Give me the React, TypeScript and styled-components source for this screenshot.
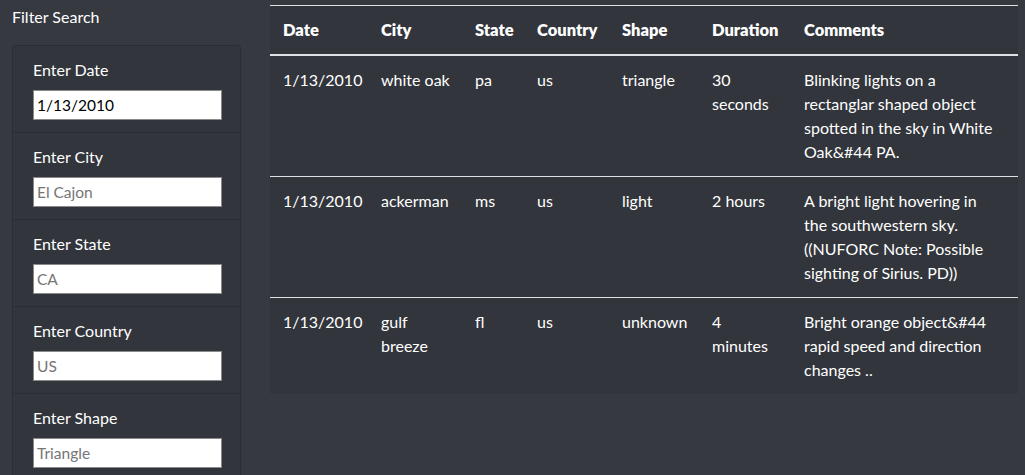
import React from "react";
import styled, { createGlobalStyle } from "styled-components";

const GlobalStyle = createGlobalStyle`
    html, body {
        margin: 0;
        padding: 0;
        background: #363940;
    }

    body {
        color: #ffffff;
        font-family: Lato, "Open Sans", sans-serif;
        font-size: 16px;
        line-height: 24px;
    }
`;

type Sighting = {
    datetime: string;
    city: string;
    state: string;
    country: string;
    shape: string;
    durationMinutes: string;
    comments: string;
};

const sightings: Array<Sighting> = [
    {
        datetime: "1/13/2010",
        city: "white oak",
        state: "pa",
        country: "us",
        shape: "triangle",
        durationMinutes: "30 seconds",
        comments: "Blinking lights on a rectanglar shaped object spotted in the sky in White Oak&#44 PA.",
    },
    {
        datetime: "1/13/2010",
        city: "ackerman",
        state: "ms",
        country: "us",
        shape: "light",
        durationMinutes: "2 hours",
        comments: "A bright light hovering in the southwestern sky. ((NUFORC Note: Possible sighting of Sirius. PD))",
    },
    {
        datetime: "1/13/2010",
        city: "gulf breeze",
        state: "fl",
        country: "us",
        shape: "unknown",
        durationMinutes: "4 minutes",
        comments: "Bright orange object&#44 rapid speed and direction changes ..",
    },
];

const filters = [
    { label: "Enter Date", id: "datetime", value: "1/13/2010", placeholder: "1/13/2010" },
    { label: "Enter City", id: "city", value: "", placeholder: "El Cajon" },
    { label: "Enter State", id: "state", value: "", placeholder: "CA" },
    { label: "Enter Country", id: "country", value: "", placeholder: "US" },
    { label: "Enter Shape", id: "shape", value: "", placeholder: "Triangle" },
];

const columns = [
    { title: "Date", width: 98 },
    { title: "City", width: 94 },
    { title: "State", width: 62 },
    { title: "Country", width: 85 },
    { title: "Shape", width: 90 },
    { title: "Duration", width: 92 },
    { title: "Comments", width: 227 },
];

const App = () => {
    return (
        <PageContainer>
            <GlobalStyle />

            <SideBar>
                <FilterTitle>Filter Search</FilterTitle>

                <FilterList>
                    {filters.map((filter) => (
                        <FilterItem key={filter.id}>
                            <FilterLabel htmlFor={filter.id}>{filter.label}</FilterLabel>
                            <FilterInput
                                id={filter.id}
                                type="text"
                                defaultValue={filter.value}
                                placeholder={filter.placeholder}
                            />
                        </FilterItem>
                    ))}
                </FilterList>
            </SideBar>

            <TableContainer>
                <UfoTable>
                    <colgroup>
                        {columns.map((column) => (
                            <col key={column.title} style={{ width: column.width }} />
                        ))}
                    </colgroup>
                    <thead>
                        <tr>
                            {columns.map((column) => (
                                <HeadCell key={column.title}>{column.title}</HeadCell>
                            ))}
                        </tr>
                    </thead>
                    <tbody>
                        {sightings.map((sighting, index) => (
                            <tr key={index}>
                                <BodyCell>{sighting.datetime}</BodyCell>
                                <BodyCell>{sighting.city}</BodyCell>
                                <BodyCell>{sighting.state}</BodyCell>
                                <BodyCell>{sighting.country}</BodyCell>
                                <BodyCell>{sighting.shape}</BodyCell>
                                <BodyCell>{sighting.durationMinutes}</BodyCell>
                                <BodyCell $wide>{sighting.comments}</BodyCell>
                            </tr>
                        ))}
                    </tbody>
                </UfoTable>
            </TableContainer>
        </PageContainer>
    );
};

const PageContainer = styled.div`
    height: 475px;
    overflow: hidden;

    display: flex;
    align-items: flex-start;
    gap: 29px;

    padding-left: 12px;
    padding-top: 5px;
`;

const SideBar = styled.div`
    width: 229px;
    flex-shrink: 0;
`;

const FilterTitle = styled.div`
    font-size: 16px;
    line-height: 24px;
    margin-bottom: 16px;
`;

const FilterList = styled.ul`
    list-style: none;
    margin: 0;
    padding: 0;

    background: #32353c;
    border: 1px solid #2a2d33;
    border-radius: 3px;
`;

const FilterItem = styled.li`
    padding: 12px 20px 12px 20px;
    border-bottom: 1px solid #2a2d33;

    display: flex;
    flex-direction: column;
`;

const FilterLabel = styled.label`
    margin-bottom: 8px;
    font-size: 16px;
    line-height: 24px;
`;

const FilterInput = styled.input`
    box-sizing: border-box;
    width: 189px;
    height: 30px;

    margin: 0;
    padding: 0 3px;

    background: #ffffff;
    border: 1px solid #8a8a8a;
    border-radius: 0;

    color: #000000;
    font-family: Lato, "Open Sans", sans-serif;
    font-size: 15.5px;

    &::placeholder {
        color: #757575;
    }
`;

const TableContainer = styled.div`
    width: 748px;
    flex-shrink: 0;
`;

const UfoTable = styled.table`
    width: 100%;
    table-layout: fixed;
    border-collapse: collapse;

    background: #32353b;
    color: #ffffff;
`;

const HeadCell = styled.th`
    padding: 12px 12px 12px 13px;
    text-align: left;
    vertical-align: bottom;

    border-top: 1px solid #dee2e6;
    border-bottom: 2px solid #dee2e6;

    font-size: 16.5px;
    font-weight: 800;
`;

const BodyCell = styled.td<{ $wide?: boolean }>`
    padding: 12px ${(props) => (props.$wide ? "20px" : "12px")} 12px 13px;
    vertical-align: top;

    border-top: 1px solid #dee2e6;
`;

export default App;
